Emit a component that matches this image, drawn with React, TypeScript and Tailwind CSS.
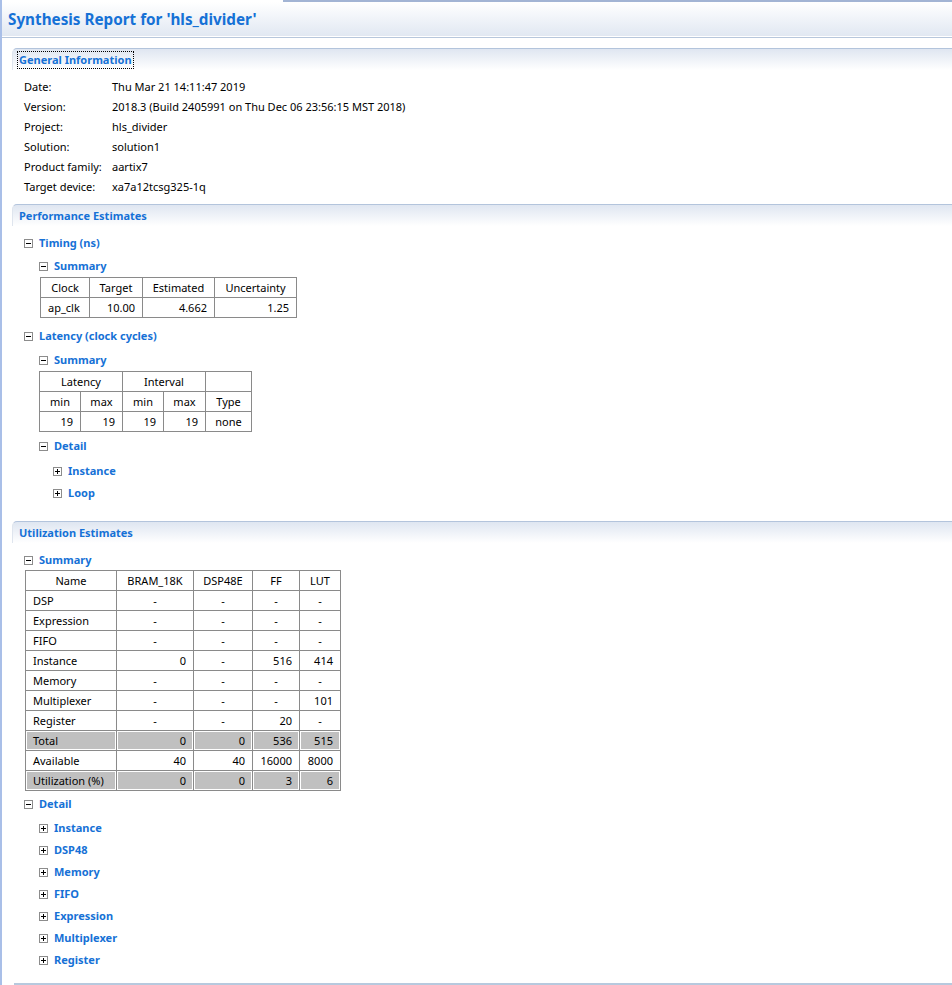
import React from "react";

const font = "font-['Noto_Sans',sans-serif]";

function Toggle({ open }: { open: boolean }) {
  return (
    <svg width="9" height="9" viewBox="0 0 9 9" className="shrink-0">
      <rect x="0.5" y="0.5" width="8" height="8" fill="#fff" stroke="#8c8c8c" />
      <path d="M2 4.5h5" stroke="#000" />
      {!open && <path d="M4.5 2v5" stroke="#000" />}
    </svg>
  );
}

function Node({ label, open = true, level, className = "" }: { label: string; open?: boolean; level: 1 | 2 | 3; className?: string }) {
  const pad = level === 1 ? "pl-[12px]" : level === 2 ? "pl-[27px]" : "pl-[41px]";
  return (
    <div className={`flex h-[22px] items-center gap-[6px] ${pad} ${className}`}>
      <Toggle open={open} />
      <span className="text-[11px] font-bold text-[#1671d6]">{label}</span>
    </div>
  );
}

function SectionHead({ title, focused = false }: { title: string; focused?: boolean }) {
  return (
    <div className="flex h-[22px] items-center rounded-tl-[5px] border-l border-t border-l-[#dfe5ee] border-t-[#b3c4dc] bg-gradient-to-b from-[#dfe6f1] to-white pl-[5px]">
      <span className={`px-[1px] text-[11px] font-bold leading-[16px] text-[#1671d6] ${focused ? "outline outline-1 outline-dotted outline-black" : ""}`}>
        {title}
      </span>
    </div>
  );
}

const info = [
  ["Date:", "Thu Mar 21 14:11:47 2019"],
  ["Version:", "2018.3 (Build 2405991 on Thu Dec 06 23:56:15 MST 2018)"],
  ["Project:", "hls_divider"],
  ["Solution:", "solution1"],
  ["Product family:", "aartix7"],
  ["Target device:", "xa7a12tcsg325-1q"],
];

const td = "h-[20px] whitespace-nowrap border border-[#8a8a8a] px-[7px] py-0 text-[11px] leading-[18px] text-black";
const grayCell = "bg-[#c0c0c0] shadow-[inset_0_0_0_1px_#fff]";

const util: [string, string, string, string, string, boolean?][] = [
  ["DSP", "-", "-", "-", "-"],
  ["Expression", "-", "-", "-", "-"],
  ["FIFO", "-", "-", "-", "-"],
  ["Instance", "0", "-", "516", "414"],
  ["Memory", "-", "-", "-", "-"],
  ["Multiplexer", "-", "-", "-", "101"],
  ["Register", "-", "-", "20", "-"],
  ["Total", "0", "0", "536", "515", true],
  ["Available", "40", "40", "16000", "8000"],
  ["Utilization (%)", "0", "0", "3", "6", true],
];

export default function App() {
  return (
    <div className={`min-h-[985px] border-l-2 border-[#a9bfe8] bg-white ${font}`}>
      <div className="flex h-[2px]">
        <div className="w-[281px] bg-white" />
        <div className="flex-1 bg-[#a2b4d4]" />
      </div>
      <div className="flex h-[34px] items-center bg-gradient-to-b from-white to-[#e1e8f2] pl-[6px]">
        <h1 className="text-[15.25px] font-bold text-[#1671d6]">Synthesis Report for 'hls_divider'</h1>
      </div>
      <div className="h-px bg-white" />
      <div className="h-px bg-[#b7c7dc]" />

      <div className="pl-[10px] pt-[10px]">
        {/* General Information */}
        <SectionHead title="General Information" focused />
        <div className="grid grid-cols-[88px_1fr] pl-[12px] pt-[7px] text-[11px] text-black">
          {info.map(([k, v]) => (
            <React.Fragment key={k}>
              <div className="flex h-[20px] items-center">{k}</div>
              <div className="flex h-[20px] items-center">{v}</div>
            </React.Fragment>
          ))}
        </div>

        {/* Performance */}
        <div className="mt-[7px]">
          <SectionHead title="Performance Estimates" />
        </div>
        <Node label="Timing (ns)" level={1} className="mt-[6px]" />
        <Node label="Summary" level={2} className="mt-[1px]" />
        <table className="ml-[28px] border-collapse">
          <tbody>
            <tr>
              <td className={`${td} w-[49px] text-center`}>Clock</td>
              <td className={`${td} w-[53px] text-center`}>Target</td>
              <td className={`${td} w-[72px] text-center`}>Estimated</td>
              <td className={`${td} w-[82px] text-center`}>Uncertainty</td>
            </tr>
            <tr>
              <td className={`${td} text-left`}>ap_clk</td>
              <td className={`${td} text-right`}>10.00</td>
              <td className={`${td} text-right`}>4.662</td>
              <td className={`${td} text-right`}>1.25</td>
            </tr>
          </tbody>
        </table>

        <Node label="Latency (clock cycles)" level={1} className="mt-[7px]" />
        <Node label="Summary" level={2} className="mt-[2px]" />
        <table className="ml-[27px] border-collapse">
          <tbody>
            <tr>
              <td colSpan={2} className={`${td} text-center`}>Latency</td>
              <td colSpan={2} className={`${td} text-center`}>Interval</td>
              <td className={td}></td>
            </tr>
            <tr>
              <td className={`${td} w-[41px] text-center`}>min</td>
              <td className={`${td} w-[42px] text-center`}>max</td>
              <td className={`${td} w-[41px] text-center`}>min</td>
              <td className={`${td} w-[42px] text-center`}>max</td>
              <td className={`${td} w-[46px] text-center`}>Type</td>
            </tr>
            <tr>
              <td className={`${td} text-right`}>19</td>
              <td className={`${td} text-right`}>19</td>
              <td className={`${td} text-right`}>19</td>
              <td className={`${td} text-right`}>19</td>
              <td className={`${td} text-center`}>none</td>
            </tr>
          </tbody>
        </table>
        <Node label="Detail" level={2} className="mt-[3px]" />
        <Node label="Instance" open={false} level={3} className="mt-[3px]" />
        <Node label="Loop" open={false} level={3} />

        {/* Utilization */}
        <div className="mt-[17px]">
          <SectionHead title="Utilization Estimates" />
        </div>
        <Node label="Summary" level={1} className="mt-[6px]" />
        <table className="-mt-[1px] ml-[13px] border-collapse">
          <tbody>
            <tr>
              <td className={`${td} w-[91px] text-center`}>Name</td>
              <td className={`${td} w-[77px] text-center`}>BRAM_18K</td>
              <td className={`${td} w-[59px] text-center`}>DSP48E</td>
              <td className={`${td} w-[47px] text-center`}>FF</td>
              <td className={`${td} w-[41px] text-center`}>LUT</td>
            </tr>
            {util.map(([name, a, b, c, d, gray]) => {
              const cell = (v: string) => (
                <td className={`${td} ${gray ? grayCell : ""} ${v === "-" ? "text-center" : "text-right"}`}>{v}</td>
              );
              return (
                <tr key={name}>
                  <td className={`${td} ${gray ? grayCell : ""} text-left`}>{name}</td>
                  {cell(a)}
                  {cell(b)}
                  {cell(c)}
                  {cell(d)}
                </tr>
              );
            })}
          </tbody>
        </table>
        <Node label="Detail" level={1} className="mt-[2px]" />
        <div className="mt-[2px]">
          {["Instance", "DSP48", "Memory", "FIFO", "Expression", "Multiplexer", "Register"].map((l) => (
            <Node key={l} label={l} open={false} level={2} />
          ))}
        </div>
        <div className="ml-[2px] mt-[12px] h-[2px] bg-[#b7c9de]" />
      </div>
    </div>
  );
}
